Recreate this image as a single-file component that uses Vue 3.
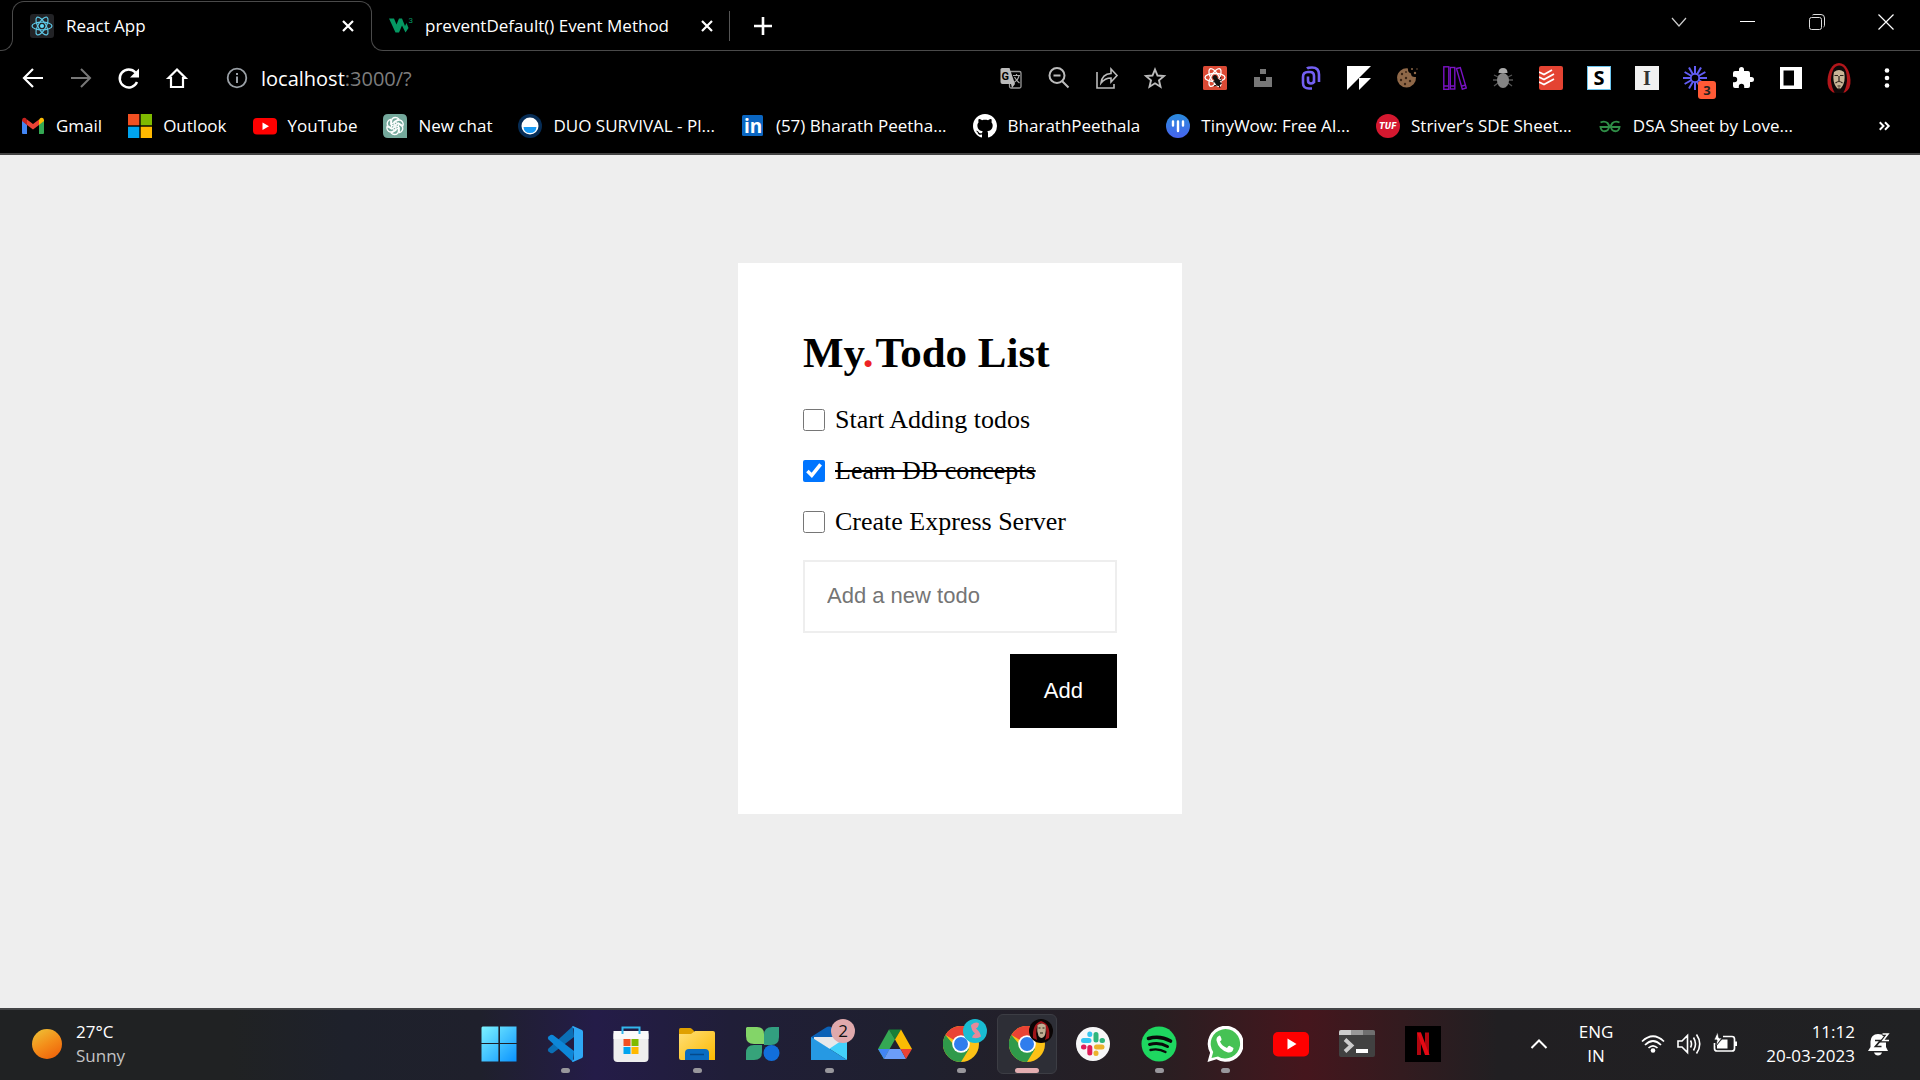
<script setup>
import { reactive, ref } from 'vue'

const todos = reactive([
  { id: 1, text: 'Start Adding todos', done: false },
  { id: 2, text: 'Learn DB concepts', done: true },
  { id: 3, text: 'Create Express Server', done: false },
])
const draft = ref('')

function addTodo() {
  const text = draft.value.trim()
  if (!text) return
  todos.push({ id: todos.length + 1, text, done: false })
  draft.value = ''
}

const rays = Array.from({ length: 12 }, (_, i) => i * 30)
</script>

<template>
  <div class="screen">
    <header class="browser">
      <div class="tab-strip">
        <div class="ear"></div>
        <div class="tab active">
          <svg class="fav" viewBox="0 0 24 24">
            <rect width="24" height="24" rx="3" fill="#222326" />
            <g fill="none" stroke="#5fc9e8" stroke-width="1.2">
              <ellipse cx="12" cy="12" rx="10" ry="3.9" />
              <ellipse cx="12" cy="12" rx="10" ry="3.9" transform="rotate(60 12 12)" />
              <ellipse cx="12" cy="12" rx="10" ry="3.9" transform="rotate(120 12 12)" />
            </g>
            <circle cx="12" cy="12" r="2" fill="#61dafb" />
          </svg>
          <span class="tab-title">React App</span>
          <button class="tab-close" aria-label="Close tab">
            <svg width="12" height="12" viewBox="0 0 12 12"><path d="M1 1l10 10M11 1L1 11" stroke="#fff" stroke-width="2.2" /></svg>
          </button>
        </div>
        <div class="strip-rest">
          <div class="tab">
            <svg class="fav" viewBox="0 0 24 24">
              <path d="M0 4.500h5l2.500 6 2.500-6h3l3 7.500 1.500-3L19.500 14 16.500 18.500 13 11.500 10 18.500H6.500z" fill="#059862" />
              <text x="19.500" y="8.500" font-size="8" font-family="Roboto, sans-serif" fill="#059862">3</text>
            </svg>
            <span class="tab-title">preventDefault() Event Method</span>
            <button class="tab-close" aria-label="Close tab">
              <svg width="12" height="12" viewBox="0 0 12 12"><path d="M1 1l10 10M11 1L1 11" stroke="#fff" stroke-width="2.200" /></svg>
            </button>
          </div>
          <span class="tab-divider"></span>
          <button class="new-tab" aria-label="New tab">
            <svg width="18" height="18" viewBox="0 0 18 18"><path d="M9 0v18M0 9h18" stroke="#fff" stroke-width="2.600" /></svg>
          </button>
          <div class="window-controls">
            <button aria-label="Search tabs"><svg width="16" height="16" viewBox="0 0 16 16"><path d="M1 4l7 8 7-8" fill="none" stroke="#ccc" stroke-width="1.200" /></svg></button>
            <button aria-label="Minimize"><svg width="16" height="16" viewBox="0 0 16 16"><path d="M0 7.500h15" stroke="#fff" /></svg></button>
            <button aria-label="Restore"><svg width="16" height="16" viewBox="0 0 16 16"><g fill="none" stroke="#ddd"><rect x=".5" y="3.500" width="12" height="12" rx="2" /><path d="M3.500 1q.5-.5 1.500-.5h7q3.500 0 3.500 3.500v7.500q0 1-1 1.500" /></g></svg></button>
            <button aria-label="Close"><svg width="16" height="16" viewBox="0 0 16 16"><path d="M.5.5l15 15M15.500.5l-15 15" stroke="#fff" stroke-width="1.200" /></svg></button>
          </div>
        </div>
      </div>

      <div class="toolbar">
        <button aria-label="Back"><svg viewBox="0 0 24 24"><path d="M22 12H3M12 3l-9 9 9 9" fill="none" stroke="#fff" stroke-width="2.200" /></svg></button>
        <button aria-label="Forward"><svg viewBox="0 0 24 24"><path d="M2 12h19M12 3l9 9-9 9" fill="none" stroke="#777" stroke-width="2" /></svg></button>
        <button aria-label="Reload"><svg viewBox="0 0 24 24"><path d="M20 16a9 9 0 1 1-1.500-9.500" fill="none" stroke="#fff" stroke-width="2.400" /><path d="M22 2.500v9h-9z" fill="#fff" /></svg></button>
        <button aria-label="Home"><svg viewBox="0 0 24 24"><path d="M3.500 12L12 3.500l8.500 8.500H18v9H6v-9z" fill="none" stroke="#fff" stroke-width="2.200" /></svg></button>
        <div class="address">
          <svg viewBox="0 0 24 24"><circle cx="12" cy="12" r="9.300" fill="none" stroke="#9aa0a6" stroke-width="1.800" /><path d="M12 10.500v6.500M12 7v2" stroke="#9aa0a6" stroke-width="2" /></svg>
          <span class="url"><span class="host">localhost</span>:3000/?</span>
        </div>
        <div class="page-actions">
          <button aria-label="Translate">
            <svg viewBox="0 0 24 24"><rect x="10.500" y="5.500" width="11.500" height="16.500" rx="1.500" fill="#000" stroke="#999" stroke-width="1.300" /><path d="M3 2h7.500l5.500 16H3.500Q1.500 18 1.500 16V3.500Q1.500 2 3 2z" fill="#bbb" /><path d="M12 18h4l-3 4z" fill="#bbb" /><text x="2.500" y="13.500" font-size="11" font-weight="700" font-family="Roboto, sans-serif" fill="#000">G</text><path d="M14 9.500h7M17.500 8v1.500M20 10q-1 4-5 6.500M15.500 11q2 3.500 5 6" fill="none" stroke="#aaa" stroke-width="1.200" /></svg>
          </button>
          <button aria-label="Zoom"><svg viewBox="0 0 24 24"><g fill="none" stroke="#bbb" stroke-width="2"><circle cx="10" cy="9.500" r="7.500" /><path d="M15 15l6.500 6.500M6.500 9.500h7" /></g></svg></button>
          <button aria-label="Share"><svg viewBox="0 0 24 24"><g fill="none" stroke="#bbb" stroke-width="1.600"><path d="M2 6v16h17v-4" /><path d="M6 17q1-9 10-9.500V3l6 6.500-6 6.500v-4q-6 0-10 5z" /></g></svg></button>
          <button aria-label="Bookmark"><svg viewBox="0 0 24 24"><path d="M12 3.500l2.500 6 6.500.5-5 4.300 1.500 6.400L12 17.300l-5.500 3.400L8 14.300 3 10l6.500-.5z" fill="none" stroke="#bbb" stroke-width="1.900" /></svg></button>
        </div>
        <div class="extensions">
          <button aria-label="React Developer Tools">
            <svg viewBox="0 0 24 24"><rect width="24" height="24" rx="1.500" fill="#db4a35" /><g fill="none" stroke="#fff" stroke-width="1.300"><ellipse cx="12" cy="11.500" rx="10" ry="4" /><ellipse cx="12" cy="11.500" rx="10" ry="4" transform="rotate(60 12 11.500)" /><ellipse cx="12" cy="11.500" rx="10" ry="4" transform="rotate(120 12 11.500)" /></g><g fill="#111" stroke="#111" stroke-width="1"><circle cx="12" cy="11.500" r="2" /><ellipse cx="14.500" cy="16" rx="2.200" ry="3.600" transform="rotate(-30 14.500 16)" /><path d="M10 16l9-2M11 20l8-3M17 13l1-2M16 19l1 3" /></g></svg>
          </button>
          <button aria-label="Unsplash"><svg viewBox="0 0 24 24"><path d="M9 3h6v5H9zM3 11h6v4h6v-4h6v10H3z" fill="#777" /></svg></button>
          <button aria-label="Paperclip"><svg viewBox="0 0 24 24"><path d="M13 22.500H10Q4 22.500 4 17V11Q4 6 9 6h2q4 0 4 4v7M9 10.500v4Q9 17.500 12 17.500t3-3M8 2.500q1-1 5-1 7 0 7 7v7.500" fill="none" stroke="#7360f2" stroke-width="2.600" /></svg></button>
          <button aria-label="Framer"><svg viewBox="0 0 24 24"><path d="M0 0h24L0 24zM12 12h12L12 24z" fill="#fff" /></svg></button>
          <button aria-label="Cookies"><svg viewBox="0 0 24 24"><path d="M13 2.500q-.5 4 3 5 0 4 5 3.500a9.500 9.500 0 1 1-8-8.500z" fill="#8f6848" /><g fill="#3a2415"><circle cx="7" cy="8" r="1.200" /><circle cx="11" cy="12" r="1.200" /><circle cx="6" cy="14" r="1.200" /><circle cx="15" cy="15" r="1.200" /><circle cx="10" cy="18" r="1.200" /><circle cx="11" cy="6" r=".9" /></g><g fill="#8f6848"><circle cx="17" cy="3" r="1" /><circle cx="20" cy="7" r="1.200" /><circle cx="22" cy="3" r=".7" /></g></svg></button>
          <button aria-label="Library"><svg viewBox="0 0 24 24"><g fill="none" stroke="#7a12c4" stroke-width="1.400"><rect x=".8" y=".8" width="5" height="22.500" /><rect x="7.300" y="1.500" width="4.500" height="21.500" /><path d="M13.500 2.500l3.800-1 6 20.500-4 1.200z" /><path d="M1 20h4.500M7.500 20h4M19 20l4-1" /></g></svg></button>
          <button aria-label="Bug"><svg viewBox="0 0 24 24"><g stroke="#555" stroke-width="1.300" fill="none"><path d="M7 11l-4-2M7 14H2M7 17l-4 3M17 11l4-2M17 14h5M17 17l4 3" /></g><path d="M7.500 7q0-5 4.500-5t4.500 5z" fill="#aaa" /><ellipse cx="12" cy="14.500" rx="6" ry="7.500" fill="#858585" /></svg></button>
          <button aria-label="Todoist"><svg viewBox="0 0 24 24"><rect width="24" height="24" rx="2" fill="#e44332" /><path d="M0 6l5 2.500L13 4M0 11l5 2.500L15 8M0 16l5 2.500L15 13" fill="none" stroke="#fff" stroke-width="1.800" /></svg></button>
          <button aria-label="Stylus"><span class="ext-letter sans">S</span></button>
          <button aria-label="Instapaper"><span class="ext-letter serif">I</span></button>
          <button class="loom" aria-label="Loom">
            <svg viewBox="0 0 24 24"><g stroke="#625df5" stroke-width="2"><path v-for="r in rays" :key="r" d="M12 0v8" :transform="`rotate(${r} 12 12)`" /></g><circle cx="12" cy="12" r="4.200" fill="#000" stroke="#625df5" stroke-width="1.800" /></svg>
            <span class="loom-badge">3</span>
          </button>
          <button aria-label="Extensions"><svg viewBox="0 0 24 24"><path d="M20.500 11H19V7a2 2 0 0 0-2-2h-4V3.500a2.500 2.500 0 0 0-5 0V5H4a2 2 0 0 0-2 2v3.800h1.500a2.700 2.700 0 0 1 0 5.400H2V20a2 2 0 0 0 2 2h3.800v-1.500a2.700 2.700 0 0 1 5.400 0V22H17a2 2 0 0 0 2-2v-4h1.500a2.500 2.500 0 0 0 0-5z" fill="#fff" /></svg></button>
          <button aria-label="Side panel"><svg viewBox="0 0 24 24"><path fill-rule="evenodd" d="M1 1h22v22H1zM4.500 4.500v15H15v-15z" fill="#fff" /></svg></button>
          <button aria-label="Profile">
            <svg class="profile" viewBox="0 0 30 30"><path d="M15 0C8 0 4 9 3.500 17q-.5 9 5.500 12.500h12Q27 26 26.500 17C26 9 22 0 15 0z" fill="#b3161b" /><path d="M15 2.500C9 2.500 7 11 7 18q1 8 4 12h8q3-4 4-12 0-15.500-8-15.500z" fill="#0c0808" /><path d="M10 9q5-4 10 0 1.500 7-.5 12-4.500 10-9 0Q8.500 16 10 9z" fill="#c9b597" /><path d="M10.500 12.500h3.500M16 12.500h3.500M15 13v5M11.500 20q3.500-3 7 0M13.500 23h3M15 24.500v2.500" stroke="#2c211a" stroke-width="1.200" fill="none" /></svg>
          </button>
          <button aria-label="Menu"><svg viewBox="0 0 24 24"><g fill="#fff"><circle cx="12" cy="4.500" r="2.300" /><circle cx="12" cy="12" r="2.300" /><circle cx="12" cy="19.500" r="2.300" /></g></svg></button>
        </div>
      </div>

      <nav class="bookmarks">
        <a href="#"><svg viewBox="0 0 24 24"><path d="M1 6v13q0 1 1 1h4v-9.500z" fill="#4285f4" /><path d="M18 10.500V20h4q1 0 1-1V6z" fill="#34a853" /><path d="M18 5.500v5.500l5-4V6q-.5-3-3.500-2z" fill="#fbbc04" /><path d="M6 11V5.500l6 4.500 6-4.500V11l-6 4.500z" fill="#ea4335" /><path d="M1 6v1l5 4V5.500L4.500 4Q1.500 3 1 6z" fill="#c5221f" /></svg>Gmail</a>
        <a href="#"><svg viewBox="0 0 24 24"><path d="M0 0h11.300v11.300H0z" fill="#f25022" /><path d="M12.700 0H24v11.300H12.700z" fill="#7fba00" /><path d="M0 12.700h11.300V24H0z" fill="#00a4ef" /><path d="M12.700 12.700H24V24H12.700z" fill="#ffb900" /></svg>Outlook</a>
        <a href="#"><svg viewBox="0 0 24 24"><rect y="4" width="24" height="16.500" rx="4" fill="#f00" /><path d="M9.500 8.500v7.500l6.500-3.700z" fill="#fff" /></svg>YouTube</a>
        <a href="#"><svg viewBox="0 0 24 24"><path d="M5 0h14q5 0 5 5v19H5q-5 0-5-5V5q0-5 5-5z" fill="#74a89b" /><g fill="none" stroke="#fff" stroke-width="1.300"><path v-for="r in 6" :key="r" d="M8.500 13.500V7.500q0-4 4-4 2 0 3.200 1.500l-4.500 2.600v4.500" :transform="`rotate(${r * 60} 12 12)`" /></g></svg>New chat</a>
        <a href="#"><svg viewBox="0 0 24 24"><circle cx="12" cy="12" r="12" fill="#062c55" /><circle cx="12" cy="12" r="8.500" fill="#fff" /><path d="M5.500 13h13q-.5 6-6.500 6t-6.500-6z" fill="#1a9bf4" /></svg>DUO SURVIVAL - Pl...</a>
        <a href="#"><svg viewBox="0 0 24 24"><rect x="1" y="1" width="21" height="21" rx="1.500" fill="#0a66c2" /><text x="3" y="18.500" font-size="19" font-weight="700" font-family="Open Sans, sans-serif" fill="#fff">in</text></svg>(57) Bharath Peetha...</a>
        <a href="#"><svg viewBox="0 0 16 16"><path fill="#fff" d="M8 0C3.580 0 0 3.580 0 8c0 3.540 2.290 6.530 5.470 7.590.4.070.55-.17.55-.38 0-.19-.01-.82-.01-1.490-2.010.37-2.530-.49-2.690-.94-.09-.23-.48-.94-.82-1.130-.28-.15-.68-.52-.01-.53.63-.01 1.080.58 1.230.82.72 1.210 1.870.87 2.330.66.07-.52.28-.87.51-1.070-1.780-.2-3.640-.89-3.640-3.950 0-.87.31-1.590.82-2.150-.08-.2-.36-1.020.08-2.120 0 0 .67-.21 2.200.82.64-.18 1.320-.27 2-.27s1.360.09 2 .27c1.530-1.040 2.200-.82 2.200-.82.44 1.100.16 1.920.08 2.120.51.56.82 1.270.82 2.150 0 3.070-1.870 3.750-3.650 3.950.29.25.54.73.54 1.480 0 1.070-.01 1.930-.01 2.200 0 .21.15.46.55.38A8.010 8.010 0 0 0 16 8c0-4.420-3.580-8-8-8z" /></svg>BharathPeethala</a>
        <a href="#"><svg viewBox="0 0 24 24"><defs><linearGradient id="tw" x2="0" y2="1"><stop stop-color="#2a8bdc" /><stop offset="1" stop-color="#4763ee" /></linearGradient></defs><circle cx="12" cy="12" r="12" fill="url(#tw)" /><g stroke="#fff" stroke-width="2.400" stroke-linecap="round"><path d="M7 7.500v4M12 7.500v9.500M17 7.500v4" /></g></svg>TinyWow: Free AI...</a>
        <a href="#"><svg viewBox="0 0 24 24"><circle cx="12" cy="12" r="12" fill="#d4182f" /><text x="12" y="15" text-anchor="middle" font-size="8" font-weight="700" font-style="italic" font-family="DejaVu Sans, sans-serif" fill="#fff">TUF</text></svg>Striver’s SDE Sheet...</a>
        <a href="#"><svg viewBox="0 0 24 24"><g fill="none" stroke="#2f8d46" stroke-width="1.900"><path d="M2.500 8.500q4-2 7 .5 1.800 2 1.500 4-.5 4-4.500 4.200-3.500 0-4-4.200h19q-.5 4.200-4 4.200-4-.2-4.500-4.200-.3-2 1.500-4 3-2.500 7-.5" /></g></svg>DSA Sheet by Love...</a>
        <button class="more" aria-label="More bookmarks"><svg width="14" height="12" viewBox="0 0 18 16"><path d="M2 3l5 5-5 5M9 3l5 5-5 5" fill="none" stroke="#fff" stroke-width="2.600" /></svg></button>
      </nav>
    </header>

    <main class="page">
      <section class="card">
        <h1>My<span class="dot">.</span>Todo List</h1>
        <ul>
          <li v-for="todo in todos" :key="todo.id">
            <input :id="`todo-${todo.id}`" v-model="todo.done" type="checkbox" />
            <label :for="`todo-${todo.id}`" :class="{ done: todo.done }">{{ todo.text }}</label>
          </li>
        </ul>
        <form @submit.prevent="addTodo">
          <input v-model="draft" type="text" placeholder="Add a new todo" aria-label="Add a new todo" />
          <button type="submit">Add</button>
        </form>
      </section>
    </main>

    <footer class="taskbar">
      <div class="weather">
        <span class="sun"></span>
        <div><div>27°C</div><div class="muted">Sunny</div></div>
      </div>
      <div class="apps">
        <button aria-label="Start"><svg viewBox="0 0 36 36"><defs><linearGradient id="win" x2="1" y2="1"><stop stop-color="#7df3ff" /><stop offset="1" stop-color="#0a93ff" /></linearGradient></defs><path d="M1.500.5H18V17H.5V1.500zM19 .5h16.500V17H19zM.5 18H18v17.500H.5zM19 18h16.500v17.500H19z" fill="url(#win)" /><path d="M18 0v36M0 17.500h36" stroke="#1f2029" stroke-width="1.200" /></svg></button>
        <button class="open" aria-label="Visual Studio Code"><svg viewBox="0 0 36 36"><path d="M26 0L1.500 22.500q-1.500 1.500 0 3l2 1.500q1 .7 2.500 0L27 11z" fill="#0b6fb5" /><path d="M26 36L1.500 13.500q-1.500-1.500 0-3l2-1.500q1-.7 2.500 0L27 25z" fill="#0d87d8" /><path d="M26 0l9 4q1 .5 1 2v24q0 1.500-1 2l-9 4q-1.500 0-.5-1.500 1.500-.5 1.500-2v-29q0-1.500-1.500-2Q24.500.5 26 0z" fill="#2fa8f5" /></svg></button>
        <button aria-label="Microsoft Store"><svg viewBox="0 0 36 36"><rect x=".5" y="5" width="35" height="31" rx="4" fill="#eee" /><path d="M.5 5h35v8H.5z" fill="#fafafa" /><path d="M9.500 8V1.500h17V8" fill="none" stroke="#32b6ec" stroke-width="2" /><path d="M10.500 13h7v7h-7z" fill="#f25022" /><path d="M18.500 13h7v7h-7z" fill="#7fba00" /><path d="M10.500 21h7v7h-7z" fill="#00a4ef" /><path d="M18.500 21h7v7h-7z" fill="#ffb900" /></svg></button>
        <button class="open" aria-label="File Explorer"><svg viewBox="0 0 36 36"><defs><linearGradient id="fold" x2="1" y2="1"><stop stop-color="#ffdf77" /><stop offset="1" stop-color="#fcb900" /></linearGradient></defs><path d="M0 3.500Q0 2 1.500 2H11q1 0 2 1l2 2v5H0z" fill="#e0a000" /><path d="M0 8h12l4-3h18q2 0 2 2v27H2q-2 0-2-2z" fill="url(#fold)" /><path d="M6 34V27q0-4 4-4h16q4 0 4 4v7z" fill="#0a6cc1" /><path d="M11 28.500h14" stroke="#05498a" stroke-width="1.500" /></svg></button>
        <button aria-label="Plant app"><svg viewBox="0 0 36 36"><path d="M2 1h10q7 0 7 7v10H9q-8 0-8-8V2z" fill="#83d568" /><path d="M34 1H27q-8 0-8 8v10h7q8 0 8-8z" fill="#329f80" /><path d="M1 34V27q0-8 8-8h8v7q0 8-8 8z" fill="#36a37a" /><circle cx="26.500" cy="27" r="8" fill="#126fdb" /></svg></button>
        <button class="open" aria-label="Mail">
          <svg viewBox="0 0 36 36"><path d="M0 11L15 1.500q3-2 6 0L36 11v12H0z" fill="#0b61b6" /><path d="M3 11h30v12H3z" fill="#e8e8ea" /><path d="M0 11l36 23V11L18 23z" fill="#43d1fb" /><path d="M0 11v23h36z" fill="#2699e3" /></svg>
          <span class="badge">2</span>
        </button>
        <button aria-label="Google Drive"><svg viewBox="0 0 36 36"><path d="M12 3.500h12l-6 10z" fill="#188038" /><path d="M12 3.500l6 10L7 33 1 23z" fill="#34a853" /><path d="M24 3.500L35 23H23.500L18 13.500z" fill="#fbbc04" /><path d="M1 23h11.500L7 33z" fill="#4285f4" /><path d="M12.500 23h11L29 33H7z" fill="#6b9df8" /><path d="M23.500 23H35l-6 10z" fill="#ea4335" /></svg></button>
        <button class="open" aria-label="Chrome">
          <svg viewBox="0 0 36 36"><circle cx="18" cy="18" r="18" fill="#fcc216" /><path d="M18 18L2.400 9A18 18 0 0 1 33.600 9z" fill="#ea4335" /><path d="M18 18h-8L2.400 9A18 18 0 0 0 18 36l8-13z" fill="#2f9a4a" /><circle cx="18" cy="18" r="8.800" fill="#fff" /><circle cx="18" cy="18" r="7" fill="#2f7ded" /></svg>
          <svg class="avatar" viewBox="0 0 24 24"><circle cx="12" cy="12" r="12" fill="#19bcd2" /><path d="M8 6q5-4 8-1.500-.5 4-3 5 4 3 5 8-4 3-9 1 .5-2.500 3-4Q8 11 8 6z" fill="#e58a9a" /></svg>
        </button>
        <button class="open current" aria-label="Chrome profile">
          <svg viewBox="0 0 36 36"><circle cx="18" cy="18" r="18" fill="#fcc216" /><path d="M18 18L2.400 9A18 18 0 0 1 33.600 9z" fill="#ea4335" /><path d="M18 18h-8L2.400 9A18 18 0 0 0 18 36l8-13z" fill="#2f9a4a" /><circle cx="18" cy="18" r="8.800" fill="#fff" /><circle cx="18" cy="18" r="7" fill="#2f7ded" /></svg>
          <svg class="avatar" viewBox="0 0 24 24"><circle cx="12" cy="12" r="12" fill="#0a0505" /><path d="M4 19Q3 5 12 2q10 3 8 17l-4 2Q20 8 12 4q-7 4-4 17z" fill="#a01419" /><path d="M8.500 6q4-3 8 0 1 7-1 11-3 4-6 0-2-5-1-11z" fill="#c0ae94" /><path d="M9.500 9h2M13.500 9h2M11 14h3" stroke="#221" /></svg>
        </button>
        <button aria-label="Slack"><svg viewBox="0 0 36 36"><circle cx="18" cy="18" r="17" fill="#f7f7f8" /><g stroke-width="5" stroke-linecap="round"><path d="M8.500 14.500H14M14.800 8v.5" stroke="#36c5f0" /><path d="M21 8.500V14M27.500 14.500H27" stroke="#2eb67d" /><path d="M21.500 21H27M21 27.500V27" stroke="#ecb22e" /><path d="M14.800 21.500V27M8.500 21H9" stroke="#e01e5a" /></g></svg></button>
        <button class="open" aria-label="Spotify"><svg viewBox="0 0 36 36"><circle cx="18" cy="18" r="17.500" fill="#1ed760" /><g fill="none" stroke="#0a0a0a" stroke-linecap="round"><path d="M7.500 12.500Q19 9 29.500 15" stroke-width="3.600" /><path d="M8.500 18.500q10-2.500 18 2" stroke-width="3" /><path d="M9.500 24q8-2 15 2" stroke-width="2.400" /></g></svg></button>
        <button class="open" aria-label="WhatsApp"><svg viewBox="0 0 36 36"><path d="M.5 36l2.600-9.200A18 18 0 1 1 9.500 33.300z" fill="#fff" /><path d="M4.500 32l1.700-6A14.700 14.700 0 1 1 11 30.500z" fill="#46c254" /><path d="M12.500 9.500q-3.500 1.500-3 5 2 9 11.500 12 5 .5 5.500-4.500l-4-2.200q-1-.2-2.500 2.200-5-2-7-6.500 2-1.500 1.500-2.500-1-4-2-3.500z" fill="#fff" /></svg></button>
        <button aria-label="YouTube"><svg viewBox="0 0 36 36"><rect x="0" y="6" width="36" height="24.500" rx="5" fill="#f00" /><path d="M14.500 12.500v11L23.500 18z" fill="#fff" /></svg></button>
        <button aria-label="Terminal"><svg viewBox="0 0 36 36"><rect y="4" width="36" height="27" rx="2" fill="#414141" /><path d="M2 4h10v5H0V6q0-2 2-2z" fill="#ccc" /><path d="M12 4h12v5H12z" fill="#999" /><path d="M24 4h10q2 0 2 2v3H24z" fill="#6f6f6f" /><path d="M6 13.500l6.500 6L6 25.500" fill="none" stroke="#ccc" stroke-width="3.800" /><path d="M17 25h12" stroke="#fff" stroke-width="4" /></svg></button>
        <button aria-label="Netflix"><svg viewBox="0 0 36 36"><path d="M0 0h36v36H0z" fill="#000" /><rect x="12" y="6.500" width="4" height="22.500" fill="#b1060f" /><rect x="20" y="6.500" width="4" height="22.500" fill="#b1060f" /><path d="M12 6.500h4L24.500 29h-4.500z" fill="#e50914" /></svg></button>
      </div>
      <div class="tray">
        <button class="tray-more" aria-label="Hidden icons"><svg width="18" height="12" viewBox="0 0 18 12"><path d="M1.500 10L9 2.500l7.500 7.500" fill="none" stroke="#fff" stroke-width="2" /></svg></button>
        <div class="lang">ENG<br />IN</div>
        <div class="status">
          <svg viewBox="0 0 24 24"><g fill="none" stroke="#fff" stroke-width="1.700"><path d="M1 9.500q11-10.500 22 0M4 13q8-8 16 0M7.500 16q4.500-4.500 9 0" /></g><circle cx="12" cy="18.500" r="2.300" fill="#fff" /></svg>
          <svg viewBox="0 0 24 24"><g fill="none" stroke="#fff" stroke-width="1.600"><path d="M1 9h4l5.500-5.500v17L5 15H1zM13.500 8.500q2 3.500 0 7M16.500 5.500q4 6.500 0 13M19.500 2.500q6.500 9.500 0 19" /></g></svg>
          <svg viewBox="0 0 24 24"><path d="M10 4.500h9q2.500 0 2.500 2.500v9.500q0 2.500-2.500 2.500H4q-2.500 0-2.500-2.500V11" fill="none" stroke="#fff" stroke-width="1.700" /><path d="M9 7.500h5.500v9H4V13z" fill="#fff" /><path d="M22 9.500h2v4.500h-2z" fill="#fff" /><path d="M4.500 0L1 8h3l-1 6 6-8H6z" fill="#fff" stroke="#202123" stroke-width=".8" /></svg>
        </div>
        <div class="clock">11:12<br />20-03-2023</div>
        <svg class="bell" viewBox="0 0 22 24"><path d="M0 19l2.500-4V9.500Q3 2 10 2q8 0 8 8v5l2 4zM6 20.500h8q-1 3-4 3t-4-3z" fill="#fff" /><path d="M7 8.500h5.500l-5 6h6" fill="none" stroke="#222" stroke-width="1.700" /><path d="M14.500 2H20l-5 6.500h6" fill="none" stroke="#222" stroke-width="4" /><path d="M14.500 2H20l-5 6.500h6" fill="none" stroke="#fff" stroke-width="1.600" /></svg>
      </div>
    </footer>
  </div>
</template>

<style>
body {
  margin: 0;
}
</style>

<style scoped>
.screen {
  display: flex;
  flex-direction: column;
  min-height: 100vh;
  font-family: "Open Sans", "Noto Sans", sans-serif;
  font-size: 17px;
  color: #fff;
}
button {
  padding: 0;
  border: 0;
  background: none;
  color: inherit;
  font: inherit;
}
svg {
  display: block;
  flex: none;
}

/* browser frame */
.browser {
  background: #000;
  border-bottom: 2px solid #434343;
}
.tab-strip {
  display: flex;
  height: 51px;
}
.ear {
  box-sizing: border-box;
  width: 13px;
  margin-top: 13px;
  border: solid #4a4a4a;
  border-width: 0 1px 1px 0;
  border-bottom-right-radius: 12px;
}
.tab {
  position: relative;
  display: flex;
  align-items: center;
  box-sizing: border-box;
  width: 360px;
  padding: 0 18px;
  gap: 12px;
}
.tab.active {
  margin: 0 -1px;
}
.tab.active::before {
  content: "";
  position: absolute;
  inset: 1px 0 auto;
  height: 12px;
  border: solid #4a4a4a;
  border-width: 1px 1px 0;
  border-radius: 12px 12px 0 0;
}
.fav {
  width: 24px;
  height: 24px;
}
.tab-title {
  flex: 1;
  white-space: nowrap;
}
.strip-rest {
  position: relative;
  display: flex;
  flex: 1;
  align-items: center;
}
.strip-rest::before {
  content: "";
  position: absolute;
  inset: 13px 0 0;
  border: solid #4a4a4a;
  border-width: 0 0 1px 1px;
  border-bottom-left-radius: 12px;
  pointer-events: none;
}
.tab-divider {
  width: 1px;
  height: 30px;
  margin-left: -2px;
  background: #555;
}
.new-tab {
  margin-left: 24px;
}
.window-controls {
  display: flex;
  align-self: flex-start;
  margin-left: auto;
}
.window-controls button {
  display: grid;
  place-items: center;
  width: 69px;
  height: 43px;
}

/* toolbar */
.toolbar {
  display: flex;
  align-items: center;
  height: 54px;
  padding: 0 9px;
}
.toolbar button {
  position: relative;
  display: grid;
  place-items: center;
  width: 48px;
  height: 48px;
}
.toolbar svg {
  width: 24px;
  height: 24px;
}
.toolbar .profile {
  width: 30px;
  height: 30px;
}
.address {
  display: flex;
  flex: 1;
  align-items: center;
  gap: 12px;
  padding-left: 24px;
}
.url {
  font-size: 20px;
  color: #7d7d7d;
}
.host {
  color: #fff;
}
.page-actions,
.extensions {
  display: flex;
}
.extensions {
  margin-left: 12px;
}
.ext-letter {
  box-sizing: border-box;
  width: 24px;
  height: 24px;
  background: #fff;
  color: #000;
  font-size: 20px;
  font-weight: 700;
  line-height: 24px;
  text-align: center;
}
.ext-letter.sans {
  border: 1px solid #6cc5ee;
  line-height: 22px;
}
.ext-letter.serif {
  background: #f1f1f1;
  color: #333;
  font-family: "Liberation Serif", serif;
}
.loom-badge {
  position: absolute;
  right: 3px;
  bottom: 3px;
  width: 18px;
  height: 18px;
  border-radius: 3px;
  background: #ff5a36;
  color: #222;
  font-size: 13px;
  font-weight: 700;
  line-height: 18px;
}

/* bookmarks */
.bookmarks {
  display: flex;
  align-items: center;
  gap: 26px;
  height: 48px;
  padding: 0 28px 6px 21px;
  box-sizing: border-box;
}
.bookmarks a {
  display: flex;
  align-items: center;
  gap: 11px;
  color: #fff;
  line-height: 22px;
  text-decoration: none;
  white-space: nowrap;
}
.bookmarks a svg {
  width: 24px;
  height: 24px;
}
.more {
  margin-left: auto;
}

/* page */
.page {
  display: flex;
  flex: 1;
  align-items: flex-start;
  justify-content: center;
  padding: 108px 24px;
  background: #eee;
}
.card {
  box-sizing: border-box;
  width: 444px;
  padding: 65px 65px 86px;
  background: #fff;
  color: #000;
  font-family: "Liberation Serif", "Times New Roman", serif;
}
h1 {
  margin: 0 0 27px;
  font-size: 43px;
  line-height: 50px;
}
.dot {
  margin-right: 2px;
  color: #ed2224;
}
ul {
  display: grid;
  gap: 21px;
  margin: 0 0 23px;
  padding: 0;
  list-style: none;
}
li {
  display: flex;
  align-items: center;
  gap: 10px;
  font-size: 26px;
  line-height: 30px;
}
li input {
  width: 22px;
  height: 22px;
  margin: 0;
  accent-color: #0075ff;
}
.done {
  text-decoration: line-through;
  text-decoration-thickness: 2px;
}
form {
  display: flex;
  flex-direction: column;
  align-items: flex-end;
  gap: 21px;
}
form input,
form button {
  font-family: "Liberation Sans", Arial, sans-serif;
  font-size: 22px;
}
form input {
  box-sizing: border-box;
  width: 100%;
  height: 73px;
  padding: 0 22px 2px;
  border: 2px solid #eee;
}
form button {
  padding: 24px 34px;
  background: #000;
  color: #fff;
  line-height: 26px;
}

/* taskbar */
.taskbar {
  display: grid;
  grid-template-columns: 1fr auto 1fr;
  align-items: center;
  box-sizing: border-box;
  height: 72px;
  padding-bottom: 2px;
  border-top: 2px solid #434446;
  background: linear-gradient(90deg, #202223 0, #202223 12%, #1e212b 18%, #1f202c 25%, #241c48 31%, #201e38 38%, #1f202e 48%, #271f22 60%, #45161d 68%, #331b1f 73%, #211f22 78%, #202123 100%);
}
.weather {
  display: flex;
  align-items: center;
  gap: 14px;
  padding-left: 32px;
  line-height: 24px;
}
.muted {
  color: #c4c4c4;
}
.sun {
  width: 30px;
  height: 30px;
  border-radius: 50%;
  background: linear-gradient(150deg, #eec035 5%, #f48d19 50%, #ef640b 90%);
}
.apps {
  display: flex;
  gap: 6px;
  padding-left: 2px;
}
.apps button {
  position: relative;
  display: grid;
  place-items: center;
  box-sizing: border-box;
  width: 60px;
  height: 60px;
  border: 1px solid transparent;
  border-radius: 6px;
}
.apps svg {
  width: 36px;
  height: 36px;
}
.apps .open::after {
  content: "";
  position: absolute;
  bottom: 0;
  width: 9px;
  height: 5px;
  border-radius: 3px;
  background: #98979c;
}
.apps .current {
  border-color: #3c3d44;
  background: #2d2e36;
}
.apps .current::after {
  width: 24px;
  background: #e2adb0;
}
.apps .avatar,
.badge {
  position: absolute;
  top: 4px;
  right: 3px;
  width: 24px;
  height: 24px;
}
.badge {
  border-radius: 50%;
  background: #e0a9ac;
  color: #111;
  line-height: 24px;
}
.tray {
  display: flex;
  align-items: center;
  justify-content: flex-end;
  padding-right: 30px;
  line-height: 24px;
}
.lang {
  margin: 0 28px 0 31px;
  text-align: center;
}
.status {
  display: flex;
  gap: 12px;
}
.status svg {
  width: 24px;
  height: 24px;
}
.clock {
  margin: 0 13px 0 29px;
  text-align: right;
}
.bell {
  width: 22px;
  height: 24px;
}
</style>
